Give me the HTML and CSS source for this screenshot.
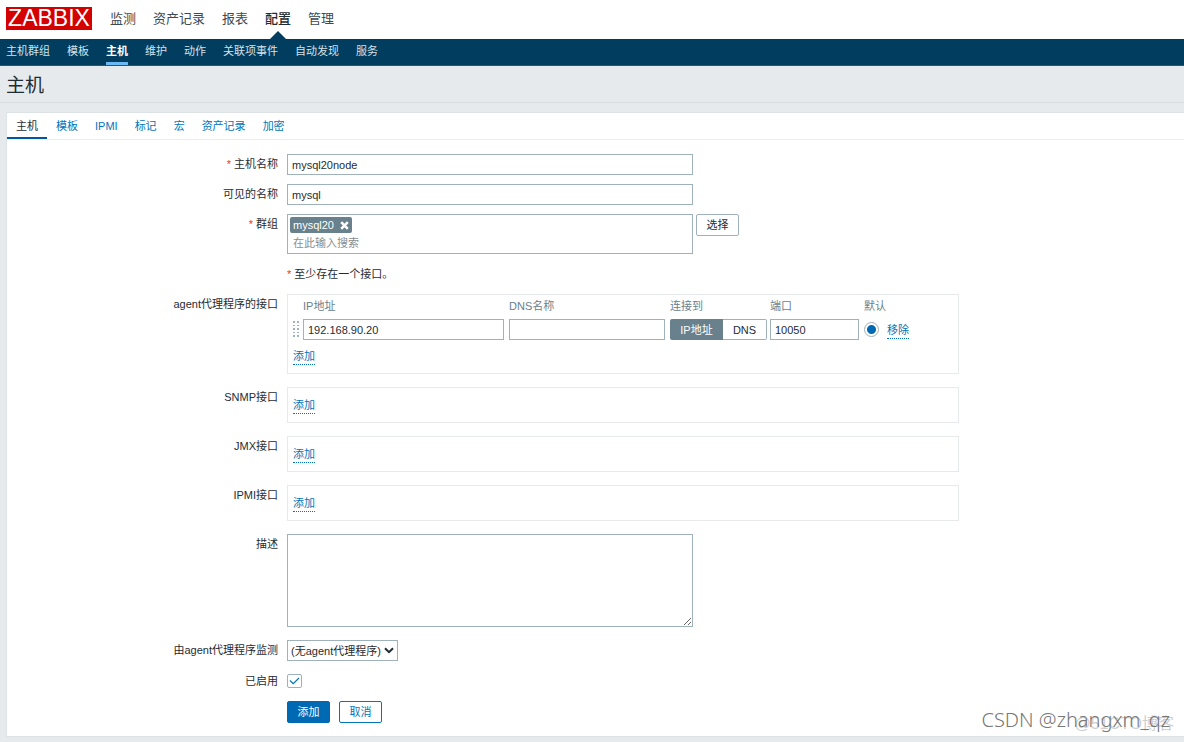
FILE: index.html
```html
<!DOCTYPE html>
<html lang="zh-CN">
<head>
<meta charset="utf-8">
<title>主机</title>
<link rel="stylesheet" href="styles.css">
</head>
<body>
<header class="top">
  <a class="logo" href="#">ZABBIX</a>
  <nav class="main-nav">
    <a href="#">监测</a>
    <a href="#">资产记录</a>
    <a href="#">报表</a>
    <a class="selected" href="#">配置</a>
    <a href="#">管理</a>
  </nav>
</header>
<nav class="sub-nav">
  <a href="#">主机群组</a>
  <a href="#">模板</a>
  <a class="selected" href="#">主机</a>
  <a href="#">维护</a>
  <a href="#">动作</a>
  <a href="#">关联项事件</a>
  <a href="#">自动发现</a>
  <a href="#">服务</a>
</nav>
<h1 class="page-title">主机</h1>
<main class="panel">
  <nav class="tabs">
    <a class="selected" href="#">主机</a>
    <a href="#">模板</a>
    <a href="#">IPMI</a>
    <a href="#">标记</a>
    <a href="#">宏</a>
    <a href="#">资产记录</a>
    <a href="#">加密</a>
  </nav>
  <form class="form">
    <div class="row">
      <label class="label required" for="host">主机名称</label>
      <input class="text wide" id="host" type="text" value="mysql20node">
    </div>
    <div class="row">
      <label class="label" for="visible">可见的名称</label>
      <input class="text wide" id="visible" type="text" value="mysql">
    </div>
    <div class="row">
      <label class="label required" for="groups">群组</label>
      <div class="group-field">
        <div class="multiselect wide">
          <span class="chip">mysql20
            <button class="chip-remove" type="button" aria-label="移除 mysql20">
              <svg width="9" height="9" viewBox="0 0 9 9"><path d="M1.2 1.2l6.6 6.6M7.8 1.2l-6.6 6.6" stroke="#fff" stroke-width="2.6"/></svg>
            </button>
          </span>
          <input class="search" id="groups" type="text" placeholder="在此输入搜索">
        </div>
        <button class="btn btn-grey" type="button">选择</button>
      </div>
    </div>
    <div class="row loose">
      <p class="note required">至少存在一个接口。</p>
    </div>
    <div class="row loose">
      <span class="label">agent代理程序的接口</span>
      <div class="box">
        <table class="interfaces">
          <thead>
            <tr>
              <th class="col-drag"></th>
              <th class="col-ip">IP地址</th>
              <th class="col-dns">DNS名称</th>
              <th class="col-connect">连接到</th>
              <th class="col-port">端口</th>
              <th colspan="2">默认</th>
            </tr>
          </thead>
          <tbody>
            <tr>
              <td>
                <svg class="drag" width="6" height="17" viewBox="0 0 6 17" fill="#a3b3bb"><path d="M0 0h2v2H0zM4 0h2v2H4zM0 4h2v1H0zM4 4h2v1H4zM0 7h2v2H0zM4 7h2v2H4zM0 11h2v1H0zM4 11h2v1H4zM0 14h2v2H0zM4 14h2v2H4z"/></svg>
              </td>
              <td><input class="text ip" type="text" value="192.168.90.20" aria-label="IP地址"></td>
              <td><input class="text dns" type="text" aria-label="DNS名称"></td>
              <td>
                <div class="toggle">
                  <button class="on" type="button">IP地址</button>
                  <button type="button">DNS</button>
                </div>
              </td>
              <td><input class="text port" type="text" value="10050" aria-label="端口"></td>
              <td class="col-radio"><input class="radio" type="radio" checked aria-label="默认"></td>
              <td><button class="link" type="button">移除</button></td>
            </tr>
          </tbody>
        </table>
        <button class="link" type="button">添加</button>
      </div>
    </div>
    <div class="row loose">
      <span class="label">SNMP接口</span>
      <div class="box empty"><button class="link" type="button">添加</button></div>
    </div>
    <div class="row loose">
      <span class="label">JMX接口</span>
      <div class="box empty"><button class="link" type="button">添加</button></div>
    </div>
    <div class="row loose">
      <span class="label">IPMI接口</span>
      <div class="box empty"><button class="link" type="button">添加</button></div>
    </div>
    <div class="row loose">
      <label class="label" for="description">描述</label>
      <textarea class="text area wide" id="description"></textarea>
    </div>
    <div class="row loose">
      <label class="label" for="proxy">由agent代理程序监测</label>
      <div class="select">
        <select class="text" id="proxy"><option>(无agent代理程序)</option></select>
        <svg width="10" height="7" viewBox="0 0 10 7" fill="none"><path d="M1 1.2l4 4 4-4" stroke="#1f2c33" stroke-width="2"/></svg>
      </div>
    </div>
    <div class="row loose middle">
      <label class="label" for="enabled">已启用</label>
      <div class="check">
        <input id="enabled" type="checkbox" checked>
        <svg width="11" height="8" viewBox="0 0 11 8" fill="none"><path d="M1 3.5l3.2 3.2L10 1" stroke="#0275b8" stroke-width="1.2"/></svg>
      </div>
    </div>
    <div class="row loose">
      <div class="actions">
        <button class="btn btn-primary" type="submit">添加</button>
        <button class="btn btn-alt" type="button">取消</button>
      </div>
    </div>
  </form>
</main>
<div class="mark mark-back">@51CTO博客</div>
<div class="mark mark-front">CSDN @zhangxm_qz</div>
</body>
</html>
```

FILE: styles.css
```css
* { box-sizing: border-box; }

body {
  position: relative;
  margin: 0;
  padding-bottom: 5px;
  background: #e6eaed;
  color: #1f2c33;
  font: 11px/14px "Liberation Sans", "Noto Sans CJK SC", sans-serif;
}

a { text-decoration: none; }
button, input, select, textarea { font: inherit; color: inherit; margin: 0; }
button { cursor: pointer; padding: 0; }

/* Navigation */
.top {
  display: flex;
  align-items: center;
  gap: 18px;
  height: 39px;
  padding: 0 6px 2px;
  background: #fff;
}
.logo {
  width: 86px;
  background: #d40000;
  color: #fff;
  font-size: 23px;
  line-height: 23px;
  text-align: center;
}
.main-nav { display: flex; gap: 17px; align-self: stretch; }
.main-nav a {
  position: relative;
  color: #3c4a52;
  font-size: 13px;
  line-height: 37px;
}
.main-nav .selected { color: #1f2c33; font-weight: 500; }
.main-nav .selected::after {
  content: "";
  position: absolute;
  left: 50%;
  bottom: -2px;
  margin-left: -8px;
  border: 8px solid transparent;
  border-top: 0;
  border-bottom-color: #003d5f;
}
.sub-nav {
  display: flex;
  gap: 17px;
  height: 27px;
  padding: 0 6px;
  background: #003d5f;
  border-bottom: 1px solid #24587a;
}
.sub-nav a {
  height: 26px;
  color: #d3e2ec;
  line-height: 25px;
}
.sub-nav .selected {
  color: #fff;
  font-weight: 700;
  border-bottom: 3px solid #69b9f5;
}

.page-title {
  margin: 0 0 9px;
  padding: 4px 6px 0;
  border-bottom: 1px solid #d8dde0;
  font-size: 19px;
  font-weight: 400;
  line-height: 32px;
}

.panel {
  margin-left: 6px;
  background: #fff;
  border: 1px solid #dde2e5;
  border-right: 0;
}
.tabs {
  display: flex;
  height: 27px;
  border-bottom: 1px solid #ebeef0;
}
.tabs a {
  height: 26px;
  padding: 0 8px 0 9px;
  color: #0275b8;
  line-height: 26px;
}
.tabs .selected {
  padding-right: 9px;
  color: #1f2c33;
  border-bottom: 2px solid #0257a5;
}

/* Form */
.form { padding: 14px 0 13px; }
.row {
  display: grid;
  grid-template-columns: 271px minmax(0, 1fr);
  column-gap: 9px;
  align-items: start;
}
.row > :last-child { grid-column: 2; }
.row + .row { margin-top: 9px; }
.row + .loose { margin-top: 13px; }
.label { text-align: right; line-height: 21px; }
.middle .label { line-height: 14px; }
.required::before { content: "* "; color: #e33734; }
.note { margin: 0; }

.text {
  height: 21px;
  padding: 0 4px;
  background: #fff;
  border: 1px solid #9fb2bb;
  border-radius: 0;
  outline: 0;
}
.wide { width: 100%; max-width: 406px; }
.area { display: block; height: 93px; }

.group-field { display: flex; align-items: flex-start; gap: 3px; }
.multiselect {
  height: 40px;
  padding: 2px;
  border: 1px solid #9fb2bb;
}
.chip {
  display: flex;
  align-items: center;
  gap: 6px;
  width: max-content;
  height: 16px;
  padding: 0 3px;
  background: #69808d;
  border-radius: 2px;
  color: #fff;
}
.chip-remove { display: flex; background: none; border: 0; }
.search {
  display: block;
  width: 100%;
  height: 19px;
  padding: 0 3px;
  background: none;
  border: 0;
  outline: 0;
}
.search::placeholder { color: #8a8f92; }

.btn {
  width: 43px;
  height: 22px;
  border: 1px solid #0275b8;
  border-radius: 2px;
  background: #fff;
}
.btn-grey { border-color: #9fb2bb; }
.btn-primary { background: #0069b4; border-color: #0069b4; color: #fff; }
.btn-alt { color: #0275b8; }
.actions { display: flex; gap: 9px; }

.box {
  max-width: 672px;
  height: 80px;
  padding: 0 5px;
  border: 1px solid #e6eaed;
}
.empty { height: 36px; padding-top: 9px; }
.link {
  display: block;
  height: 17px;
  background: none;
  border: 0;
  border-bottom: 1px dotted #0275b8;
  color: #0275b8;
  line-height: 16px;
}
.interfaces { border-collapse: collapse; margin-bottom: 8px; }
.interfaces th {
  height: 24px;
  padding: 0;
  color: #69808d;
  font-weight: 400;
  line-height: 22px;
  text-align: left;
  vertical-align: top;
}
.interfaces td { height: 21px; padding: 0; vertical-align: middle; }
.interfaces .text { display: block; }
.interfaces .link { height: 18px; line-height: 18px; }
.col-drag { width: 10px; }
.col-ip { width: 206px; }
.col-dns { width: 161px; }
.col-connect { width: 100px; }
.col-port { width: 94px; }
.col-radio { width: 23px; }
.ip { width: 201px; }
.dns { width: 156px; }
.port { width: 89px; }
.drag { display: block; }

.toggle { display: flex; width: 97px; height: 21px; }
.toggle button {
  flex: 1 1 44px;
  border: 1px solid #9fb2bb;
  border-left: 0;
  border-radius: 0 2px 2px 0;
  background: #fff;
}
.toggle .on {
  flex: 0 0 53px;
  border: 0;
  border-radius: 2px 0 0 2px;
  background: #69808d;
  color: #fff;
}
.radio {
  display: block;
  appearance: none;
  width: 15px;
  height: 15px;
  border: 1px solid #9fb2bb;
  border-radius: 50%;
  background: radial-gradient(circle, #0069b4 4px, #fff 5px);
}

.select { position: relative; width: 111px; }
.select select { display: block; appearance: none; width: 100%; padding: 0 3px; }
.select svg { position: absolute; right: 4px; top: 7px; pointer-events: none; }

.check { position: relative; width: 15px; height: 14px; }
.check input {
  display: block;
  appearance: none;
  width: 15px;
  height: 14px;
  border: 1px solid #9fb2bb;
  border-radius: 2px;
  background: #fff;
}
.check svg { position: absolute; left: 2px; top: 3px; pointer-events: none; }

/* Watermarks laid over the page corner */
.mark { position: absolute; white-space: nowrap; pointer-events: none; }
.mark-front {
  right: 14px;
  bottom: 10px;
  color: #777;
  font: 300 20px/24px "Noto Sans", "Open Sans", sans-serif;
}
.mark-back {
  right: 10px;
  bottom: 7px;
  color: #cfcfcf;
  font-size: 16px;
  line-height: 22px;
}
```
